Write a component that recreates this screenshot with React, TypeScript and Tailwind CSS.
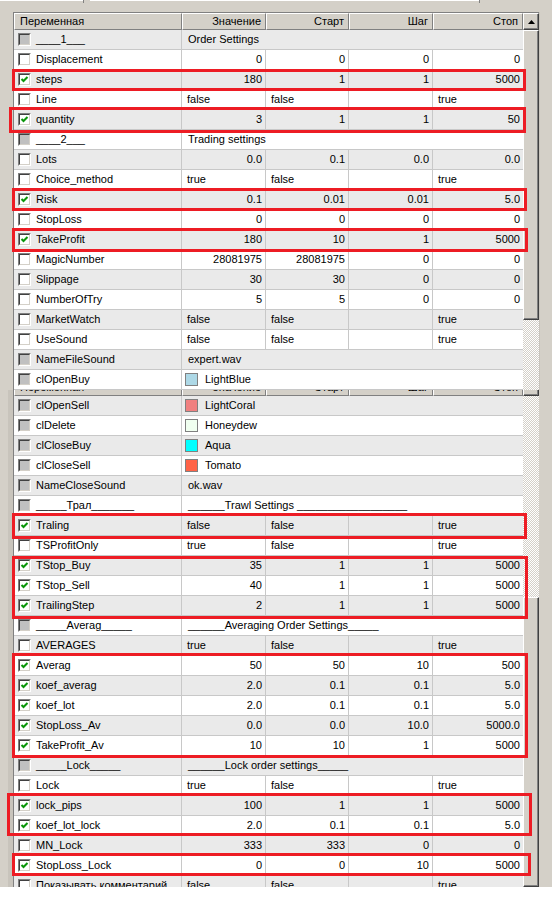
import React from 'react'

type Row =
  | { t: 'sec'; name: string; label: string }
  | { t: 'num'; name: string; on?: boolean; v: string[] }
  | { t: 'bool'; name: string; on?: boolean; v: string[] }
  | { t: 'str'; name: string; v: string }
  | { t: 'clr'; name: string; v: string; sw: string }

const part1: Row[] = [
  { t: 'sec', name: '____1___', label: 'Order Settings' },
  { t: 'num', name: 'Displacement', v: ['0', '0', '0', '0'] },
  { t: 'num', name: 'steps', on: true, v: ['180', '1', '1', '5000'] },
  { t: 'bool', name: 'Line', v: ['false', 'false', '', 'true'] },
  { t: 'num', name: 'quantity', on: true, v: ['3', '1', '1', '50'] },
  { t: 'sec', name: '____2___', label: 'Trading settings' },
  { t: 'num', name: 'Lots', v: ['0.0', '0.1', '0.0', '0.0'] },
  { t: 'bool', name: 'Choice_method', v: ['true', 'false', '', 'true'] },
  { t: 'num', name: 'Risk', on: true, v: ['0.1', '0.01', '0.01', '5.0'] },
  { t: 'num', name: 'StopLoss', v: ['0', '0', '0', '0'] },
  { t: 'num', name: 'TakeProfit', on: true, v: ['180', '10', '1', '5000'] },
  { t: 'num', name: 'MagicNumber', v: ['28081975', '28081975', '0', '0'] },
  { t: 'num', name: 'Slippage', v: ['30', '30', '0', '0'] },
  { t: 'num', name: 'NumberOfTry', v: ['5', '5', '0', '0'] },
  { t: 'bool', name: 'MarketWatch', v: ['false', 'false', '', 'true'] },
  { t: 'bool', name: 'UseSound', v: ['false', 'false', '', 'true'] },
  { t: 'str', name: 'NameFileSound', v: 'expert.wav' },
  { t: 'clr', name: 'clOpenBuy', v: 'LightBlue', sw: 'bg-[#add8e6]' },
]

const part2: Row[] = [
  { t: 'clr', name: 'clOpenSell', v: 'LightCoral', sw: 'bg-[#f08080]' },
  { t: 'clr', name: 'clDelete', v: 'Honeydew', sw: 'bg-[#f0fff0]' },
  { t: 'clr', name: 'clCloseBuy', v: 'Aqua', sw: 'bg-[#00ffff]' },
  { t: 'clr', name: 'clCloseSell', v: 'Tomato', sw: 'bg-[#ff6347]' },
  { t: 'str', name: 'NameCloseSound', v: 'ok.wav' },
  { t: 'sec', name: '_____Трал_______', label: '______Trawl Settings __________________' },
  { t: 'bool', name: 'Traling', on: true, v: ['false', 'false', '', 'true'] },
  { t: 'bool', name: 'TSProfitOnly', v: ['true', 'false', '', 'true'] },
  { t: 'num', name: 'TStop_Buy', on: true, v: ['35', '1', '1', '5000'] },
  { t: 'num', name: 'TStop_Sell', on: true, v: ['40', '1', '1', '5000'] },
  { t: 'num', name: 'TrailingStep', on: true, v: ['2', '1', '1', '5000'] },
  { t: 'sec', name: '_____Averag_____', label: '______Averaging Order Settings_____' },
  { t: 'bool', name: 'AVERAGES', v: ['true', 'false', '', 'true'] },
  { t: 'num', name: 'Averag', on: true, v: ['50', '50', '10', '500'] },
  { t: 'num', name: 'koef_averag', on: true, v: ['2.0', '0.1', '0.1', '5.0'] },
  { t: 'num', name: 'koef_lot', on: true, v: ['2.0', '0.1', '0.1', '5.0'] },
  { t: 'num', name: 'StopLoss_Av', on: true, v: ['0.0', '0.0', '10.0', '5000.0'] },
  { t: 'num', name: 'TakeProfit_Av', on: true, v: ['10', '10', '1', '5000'] },
  { t: 'sec', name: '_____Lock_____', label: '______Lock order settings_____' },
  { t: 'bool', name: 'Lock', v: ['true', 'false', '', 'true'] },
  { t: 'num', name: 'lock_pips', on: true, v: ['100', '1', '1', '5000'] },
  { t: 'num', name: 'koef_lot_lock', on: true, v: ['2.0', '0.1', '0.1', '5.0'] },
  { t: 'num', name: 'MN_Lock', v: ['333', '333', '0', '0'] },
  { t: 'num', name: 'StopLoss_Lock', on: true, v: ['0', '0', '10', '5000'] },
  { t: 'bool', name: 'Показывать комментарий', v: ['false', 'false', '', 'true'] },
]

// widths of the value columns (Значение, Старт, Шаг, Стоп)
const cols = ['w-[84px] border-r', 'w-[83px] border-r', 'w-[84px] border-r', 'w-[90px]']

const raised =
  'bg-[#d4d0c8] border-t border-l border-t-white border-l-white border-r border-b border-r-[#404040] border-b-[#404040] shadow-[inset_-1px_-1px_0_#808080]'
const checker =
  'bg-[image:repeating-conic-gradient(#ffffff_0%_25%,#d4d0c8_0%_50%)] [background-size:2px_2px]'

function Box({ state }: { state: 'on' | 'off' | 'dis' }) {
  return (
    <div className="h-[13px] w-[13px] shrink-0 border border-[#808080] border-r-white border-b-white">
      <div
        className={`flex h-full w-full items-center justify-center border border-[#404040] border-r-[#d4d0c8] border-b-[#d4d0c8] ${
          state === 'dis' ? 'bg-[#c0c0c0]' : 'bg-white'
        }`}
      >
        {state === 'on' && (
          <svg width="9" height="9" viewBox="0 0 9 9">
            <path d="M1.5 4 L3.5 6 L7.5 2" fill="none" stroke="#0a960a" strokeWidth="2" />
          </svg>
        )}
      </div>
    </div>
  )
}

function Line({ row, i }: { row: Row; i: number }) {
  const bg = i % 2 === 0 ? 'bg-[#eaeaea]' : 'bg-white'
  const state = row.t === 'sec' || row.t === 'str' || row.t === 'clr' ? 'dis' : row.on ? 'on' : 'off'
  return (
    <div className={`flex h-[20px] shrink-0 border-b border-[#c8c8c8] ${bg}`}>
      <div className="flex w-[168px] shrink-0 items-center gap-[5px] border-r border-[#c8c8c8] pl-[4px]">
        <Box state={state} />
        <span className="whitespace-nowrap">{row.name}</span>
      </div>
      {row.t === 'num' &&
        row.v.map((v, k) => (
          <div key={k} className={`${cols[k]} flex shrink-0 items-center justify-end border-[#c8c8c8] pr-[3px]`}>
            {v}
          </div>
        ))}
      {row.t === 'bool' &&
        row.v.map((v, k) => (
          <div key={k} className={`${cols[k]} flex shrink-0 items-center border-[#c8c8c8] pl-[5px]`}>
            {v}
          </div>
        ))}
      {(row.t === 'sec' || row.t === 'str') && (
        <div className="flex w-[341px] shrink-0 items-center whitespace-nowrap pl-[6px]">
          {row.t === 'sec' ? row.label : row.v}
        </div>
      )}
      {row.t === 'clr' && (
        <div className="flex w-[341px] shrink-0 items-center gap-[7px] pl-[3px]">
          <div className={`h-[13px] w-[13px] border border-[#808080] ${row.sw}`} />
          <span>{row.v}</span>
        </div>
      )}
    </div>
  )
}

function Header() {
  const cells = [
    { label: 'Переменная', w: 'w-[168px] justify-start pl-[5px]' },
    { label: 'Значение', w: 'w-[84px] justify-end pr-[4px]' },
    { label: 'Старт', w: 'w-[83px] justify-end pr-[4px]' },
    { label: 'Шаг', w: 'w-[84px] justify-end pr-[4px]' },
    { label: 'Стоп', w: 'w-[90px] justify-end pr-[4px]' },
  ]
  return (
    <div className="flex h-[17px] shrink-0 bg-[#d4d0c8]">
      {cells.map((c) => (
        <div
          key={c.label}
          className={`${c.w} flex shrink-0 items-center border-t border-l border-t-white border-l-white border-r border-b border-r-[#808080] border-b-[#808080]`}
        >
          {c.label}
        </div>
      ))}
    </div>
  )
}

function UpButton() {
  return (
    <div className={`flex h-[17px] shrink-0 items-center justify-center ${raised}`}>
      <svg width="7" height="4" viewBox="0 0 7 4">
        <path d="M3.5 0 L7 4 L0 4 Z" fill="#000" />
      </svg>
    </div>
  )
}

export default function App() {
  return (
    <div className="relative h-[898px] w-[552px] overflow-hidden bg-white font-['Liberation_Sans',Arial,sans-serif] text-[11px] leading-none text-black">
      {/* first capture */}
      <div className="flex h-[390px] flex-col bg-[#d4d0c8]">
        <div className="flex h-[12px] shrink-0">
          <div className="h-[3px] w-[83px] border-t border-white" />
          <div className="h-[3px] w-[1px] bg-[#808080]" />
          <div className="w-[6px]" />
          <div className="h-[3px] w-[389px] border-t border-white" />
          <div className="h-[3px] w-[1px] bg-[#808080]" />
        </div>
        <div className="flex flex-1">
          <div className="w-[13px] shrink-0" />
          <div className="flex w-[526px] shrink-0 border-t border-l border-[#808080]">
            <div className="flex w-[509px] flex-col">
              <Header />
              {part1.map((r, i) => (
                <Line key={r.name} row={r} i={i} />
              ))}
            </div>
            <div className="flex w-[16px] flex-col">
              <UpButton />
              <div className={`h-[290px] shrink-0 ${raised}`} />
              <div className={`flex-1 ${checker}`} />
            </div>
          </div>
          <div className="w-[13px] shrink-0 border-l border-[#c8c4bc]" />
        </div>
      </div>

      {/* second capture */}
      <div className="flex h-[497px] overflow-hidden bg-[#d4d0c8]">
        <div className="flex w-[13px] shrink-0">
          <div className="w-[8px]" />
          <div className="w-[5px] bg-[#c8c4bc]" />
        </div>
        <div className="flex w-[526px] shrink-0 border-l border-[#808080]">
          <div className="flex w-[509px] flex-col">
            <div className="flex h-[6px] shrink-0 flex-col justify-end overflow-hidden">
              <Header />
            </div>
            {part2.map((r, i) => (
              <Line key={r.name} row={r} i={i} />
            ))}
          </div>
          <div className="flex w-[16px] flex-col">
            <div className="h-[6px] shrink-0 border-r border-b border-l border-l-white border-[#404040] bg-[#d4d0c8] shadow-[inset_-1px_-1px_0_#808080]" />
            <div className={`h-[201px] shrink-0 ${checker}`} />
            <div className={`flex-1 ${raised}`} />
          </div>
        </div>
        <div className="w-[13px] shrink-0" />
      </div>

      {/* red highlight frames drawn over the table */}
      <div className="pointer-events-none absolute left-[12px] top-[69px] h-[22px] w-[514px] border-[3px] border-[#ed1c24]" />
      <div className="pointer-events-none absolute left-[9px] top-[107px] h-[26px] w-[517px] border-[3px] border-[#ed1c24]" />
      <div className="pointer-events-none absolute left-[12px] top-[188px] h-[23px] w-[515px] border-[3px] border-[#ed1c24]" />
      <div className="pointer-events-none absolute left-[12px] top-[228px] h-[24px] w-[516px] border-[3px] border-[#ed1c24]" />
      <div className="pointer-events-none absolute left-[12px] top-[513px] h-[26px] w-[515px] border-[3px] border-[#ed1c24]" />
      <div className="pointer-events-none absolute left-[12px] top-[556px] h-[63px] w-[516px] border-[3px] border-[#ed1c24]" />
      <div className="pointer-events-none absolute left-[12px] top-[653px] h-[105px] w-[516px] border-[3px] border-[#ed1c24]" />
      <div className="pointer-events-none absolute left-[7px] top-[793px] h-[43px] w-[525px] border-[3px] border-[#ed1c24]" />
      <div className="pointer-events-none absolute left-[12px] top-[853px] h-[23px] w-[519px] border-[3px] border-[#ed1c24]" />
    </div>
  )
}
